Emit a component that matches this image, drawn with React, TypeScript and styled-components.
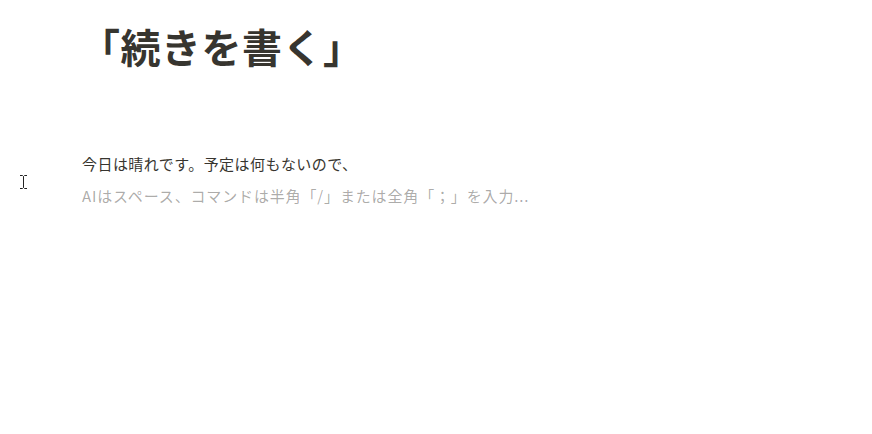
import React from "react";
import styled, { createGlobalStyle } from "styled-components";

const GlobalStyle = createGlobalStyle`
  html, body {
    margin: 0;
    padding: 0;
    background: #ffffff;
  }
  body {
    font-family: "Noto Sans CJK JP", "Noto Sans", sans-serif;
    color: #37352f;
  }
`;

const Page = styled.div`
  position: relative;
  width: 872px;
  height: 434px;
  overflow: hidden;
  background: #ffffff;
`;

const Editor = styled.main`
  display: flex;
  flex-direction: column;
  padding: 16px 0 0 82px;
`;

const Title = styled.h1`
  margin: 0 0 0 -2px;
  font-size: 40px;
  line-height: 60px;
  font-weight: 700;
  letter-spacing: 0.5px;
  color: #37352f;
`;

const Body = styled.div`
  display: flex;
  flex-direction: column;
  gap: 4px;
  margin-top: 74px;
`;

const Line = styled.p<{ $placeholder?: boolean }>`
  margin: 0;
  font-size: 15px;
  line-height: 28px;
  letter-spacing: ${({ $placeholder }) => ($placeholder ? "0.85px" : "0.45px")};
  color: ${({ $placeholder }) =>
    $placeholder ? "rgba(55, 53, 47, 0.42)" : "#37352f"};
`;

const Cursor = styled.svg`
  position: absolute;
  left: 19px;
  top: 174px;
`;

const IBeam = () => (
  <Cursor width="9" height="16" viewBox="0 0 9 16">
    <path
      d="M1 1.5h2.5l1 1 1-1H8M4.5 2.5v11M1 14.5h2.5l1-1 1 1H8"
      fill="none"
      stroke="#222"
      strokeWidth="1"
    />
  </Cursor>
);

export default function App() {
  return (
    <>
      <GlobalStyle />
      <Page>
        <Editor>
          <Title>「続きを書く」</Title>
          <Body>
            <Line>今日は晴れです。予定は何もないので、</Line>
            <Line $placeholder>
              AIはスペース、コマンドは半角「/」または全角「；」を入力...
            </Line>
          </Body>
        </Editor>
        <IBeam />
      </Page>
    </>
  );
}
